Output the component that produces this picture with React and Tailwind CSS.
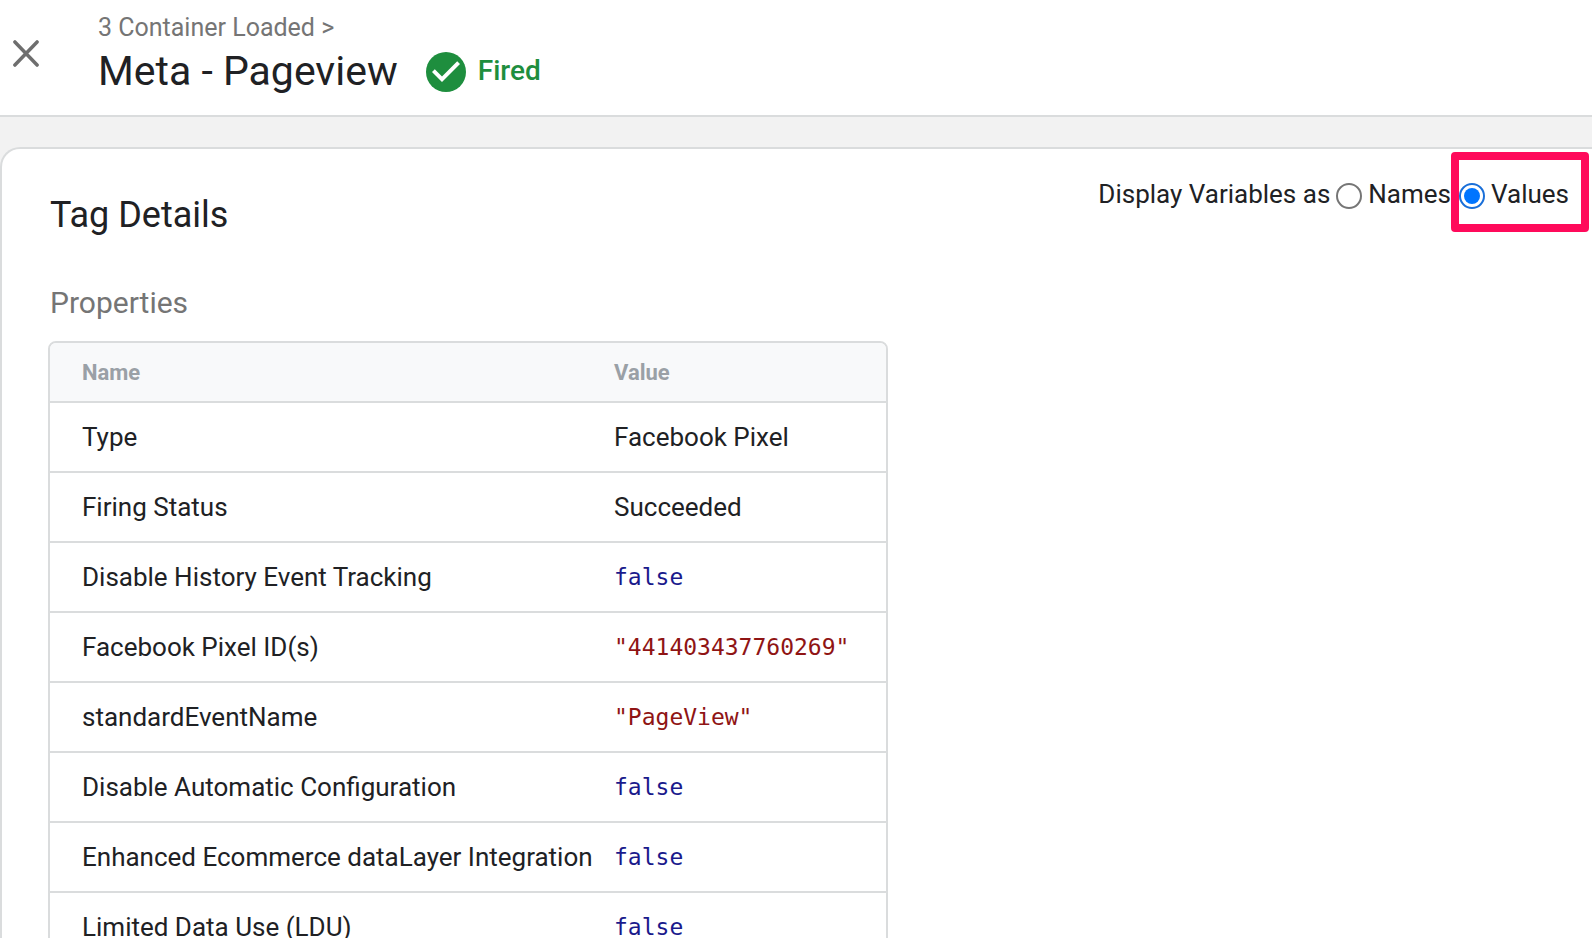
import React, { useState } from "react";

const properties = [
  { name: "Type", value: "Facebook Pixel", kind: "text" },
  { name: "Firing Status", value: "Succeeded", kind: "text" },
  { name: "Disable History Event Tracking", value: "false", kind: "boolean" },
  { name: "Facebook Pixel ID(s)", value: '"441403437760269"', kind: "string" },
  { name: "standardEventName", value: '"PageView"', kind: "string" },
  { name: "Disable Automatic Configuration", value: "false", kind: "boolean" },
  { name: "Enhanced Ecommerce dataLayer Integration", value: "false", kind: "boolean" },
  { name: "Limited Data Use (LDU)", value: "false", kind: "boolean" },
];

const valueStyles = {
  text: "",
  boolean: "font-['DejaVu_Sans_Mono',monospace] text-[23px] text-[#1a1a8c]",
  string: "font-['DejaVu_Sans_Mono',monospace] text-[23px] text-[#8f1414]",
};

const radioStyle =
  "mt-1 h-[26px] w-[26px] shrink-0 appearance-none rounded-full border-2 border-[#767676] bg-white bg-clip-content p-[3px] checked:border-[#1a6fd8] checked:bg-[#0075ff]";

function Header() {
  return (
    <header className="flex shrink-0 items-start border-b-2 border-[#dadcdd] bg-white pb-[18px] pl-3 pt-3">
      <button type="button" aria-label="Close" className="mt-7 text-[#6e6e6e]">
        <svg width="28" height="27" viewBox="0 0 28 28" fill="none" stroke="currentColor" strokeWidth="3.6" strokeLinecap="round">
          <path d="M2.5 2 25.5 26M25.5 2 2.5 26" />
        </svg>
      </button>
      <div className="ml-[58px]">
        <p className="text-[25px] leading-8 text-[#757575]">3 Container Loaded &gt;</p>
        <div className="mt-px flex items-center">
          <h1 className="text-[41px] leading-[52px]">Meta - Pageview</h1>
          <svg className="ml-7 mt-0.5" width="40" height="40" viewBox="2 2 20 20" aria-hidden="true">
            <circle cx="12" cy="12" r="10" fill="#1e8e3e" />
            <path d="m10 17-5-5 1.4-1.4 3.6 3.6 7.6-7.6L19 8z" fill="#fff" />
          </svg>
          <span className="ml-3 text-[28px] font-medium text-[#1e8e3e]">Fired</span>
        </div>
      </div>
    </header>
  );
}

function DisplayToggle() {
  const [display, setDisplay] = useState("values");

  return (
    <div
      role="radiogroup"
      aria-labelledby="display-label"
      className="mr-[3px] mt-[3px] flex items-center text-[26px] leading-8"
    >
      <span id="display-label" className="pt-1">Display Variables as</span>
      <label className="ml-[6px] flex items-center gap-[6px] pt-1">
        <input
          type="radio"
          name="display"
          className={radioStyle}
          checked={display === "names"}
          onChange={() => setDisplay("names")}
        />
        Names
      </label>
      {/* Highlighted option */}
      <label className="flex h-20 items-center gap-[6px] rounded border-8 border-[#ff0a5b] pr-3 pt-1">
        <input
          type="radio"
          name="display"
          className={radioStyle}
          checked={display === "values"}
          onChange={() => setDisplay("values")}
        />
        Values
      </label>
    </div>
  );
}

function PropertiesTable() {
  return (
    <div className="mt-5 w-[840px] max-w-full overflow-hidden rounded-lg border-2 border-[#dadcdd]">
      <table className="w-full text-left">
        <thead className="bg-[#f8f9fa] text-[22px] text-[#9aa0a6]">
          <tr className="h-[59px]">
            <th className="w-[564px] pl-8 font-bold">Name</th>
            <th className="font-bold">Value</th>
          </tr>
        </thead>
        <tbody className="text-[26px]">
          {properties.map(property => (
            <tr key={property.name} className="h-[70px] border-t-2 border-[#dadcdd]">
              <td className="whitespace-nowrap pl-8">{property.name}</td>
              <td className={valueStyles[property.kind]}>{property.value}</td>
            </tr>
          ))}
        </tbody>
      </table>
    </div>
  );
}

function App() {
  return (
    <div className="flex h-screen flex-col overflow-hidden bg-[#f2f2f2] font-[Roboto,sans-serif] text-[#202124]">
      <Header />
      <main className="mt-[30px] flex-1 overflow-hidden rounded-tl-[20px] border-l-2 border-t-2 border-[#dadcdd] bg-white">
        <div className="flex items-start justify-between">
          <h2 className="ml-12 mt-11 text-4xl leading-[44px]">Tag Details</h2>
          <DisplayToggle />
        </div>
        <section className="ml-[46px] mt-12">
          <h3 className="pl-0.5 text-[30px] leading-9 text-[#757575]">Properties</h3>
          <PropertiesTable />
        </section>
      </main>
    </div>
  );
}

export default App;
